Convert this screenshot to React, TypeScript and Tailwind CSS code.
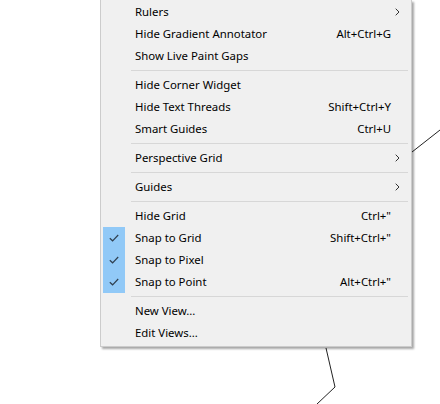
type Item =
  | { sep: true }
  | { label: string; shortcut?: string; sub?: boolean; checked?: boolean; sep?: false };

const items: Item[] = [
  { label: 'Rulers', sub: true },
  { label: 'Hide Gradient Annotator', shortcut: 'Alt+Ctrl+G' },
  { label: 'Show Live Paint Gaps' },
  { sep: true },
  { label: 'Hide Corner Widget' },
  { label: 'Hide Text Threads', shortcut: 'Shift+Ctrl+Y' },
  { label: 'Smart Guides', shortcut: 'Ctrl+U' },
  { sep: true },
  { label: 'Perspective Grid', sub: true },
  { sep: true },
  { label: 'Guides', sub: true },
  { sep: true },
  { label: 'Hide Grid', shortcut: 'Ctrl+"' },
  { label: 'Snap to Grid', shortcut: 'Shift+Ctrl+"', checked: true },
  { label: 'Snap to Pixel', checked: true },
  { label: 'Snap to Point', shortcut: 'Alt+Ctrl+"', checked: true },
  { sep: true },
  { label: 'New View...' },
  { label: 'Edit Views...' },
];

const Check = () => (
  <svg width="10" height="8" viewBox="0 0 10 8" fill="none">
    <path d="M0.8 4.2 L3.6 6.8 L9.2 1" stroke="#2f3f4f" strokeWidth="1.2" />
  </svg>
);

const Chevron = () => (
  <svg width="5" height="8" viewBox="0 0 5 8" fill="none">
    <path d="M0.7 0.7 L4 4 L0.7 7.3" stroke="#333" strokeWidth="1" />
  </svg>
);

export default function App() {
  return (
    <div
      className="relative h-[404px] w-[440px] overflow-hidden bg-white text-[11.4px] text-black"
      style={{ fontFamily: '"Noto Sans", "Segoe UI", sans-serif' }}
    >
      {/* canvas artwork behind the menu */}
      <svg className="absolute inset-0" width="440" height="404" fill="none">
        <path d="M412 152 L440 130" stroke="#222" strokeWidth="1" />
        <path d="M326 348 L335 387 L317 404" stroke="#222" strokeWidth="1" />
      </svg>

      <div className="relative ml-[100px] w-[312px] border border-t-0 border-[#cccccc] bg-[#f0f0f0] px-[2px] pt-px pb-[2px] shadow-[2px_2px_2px_rgba(0,0,0,0.35)]">
        {items.map((it, i) =>
          it.sep ? (
            <div key={i} className="flex h-[7px] items-center">
              <div className="ml-[28px] mr-px h-px flex-1 bg-[#d7d7d7]" />
            </div>
          ) : (
            <div key={i} className="flex h-[22px] items-center">
              <div
                className={`flex h-[22px] w-[22px] items-center justify-center ${
                  it.checked ? 'bg-[#91c9f7]' : ''
                }`}
              >
                {it.checked && <Check />}
              </div>
              <span className="ml-[10px] flex-1 leading-none">{it.label}</span>
              {it.shortcut && <span className="leading-none">{it.shortcut}</span>}
              <div className="flex w-[18px] items-center pl-[4px]">{it.sub && <Chevron />}</div>
            </div>
          ),
        )}
      </div>
    </div>
  );
}
